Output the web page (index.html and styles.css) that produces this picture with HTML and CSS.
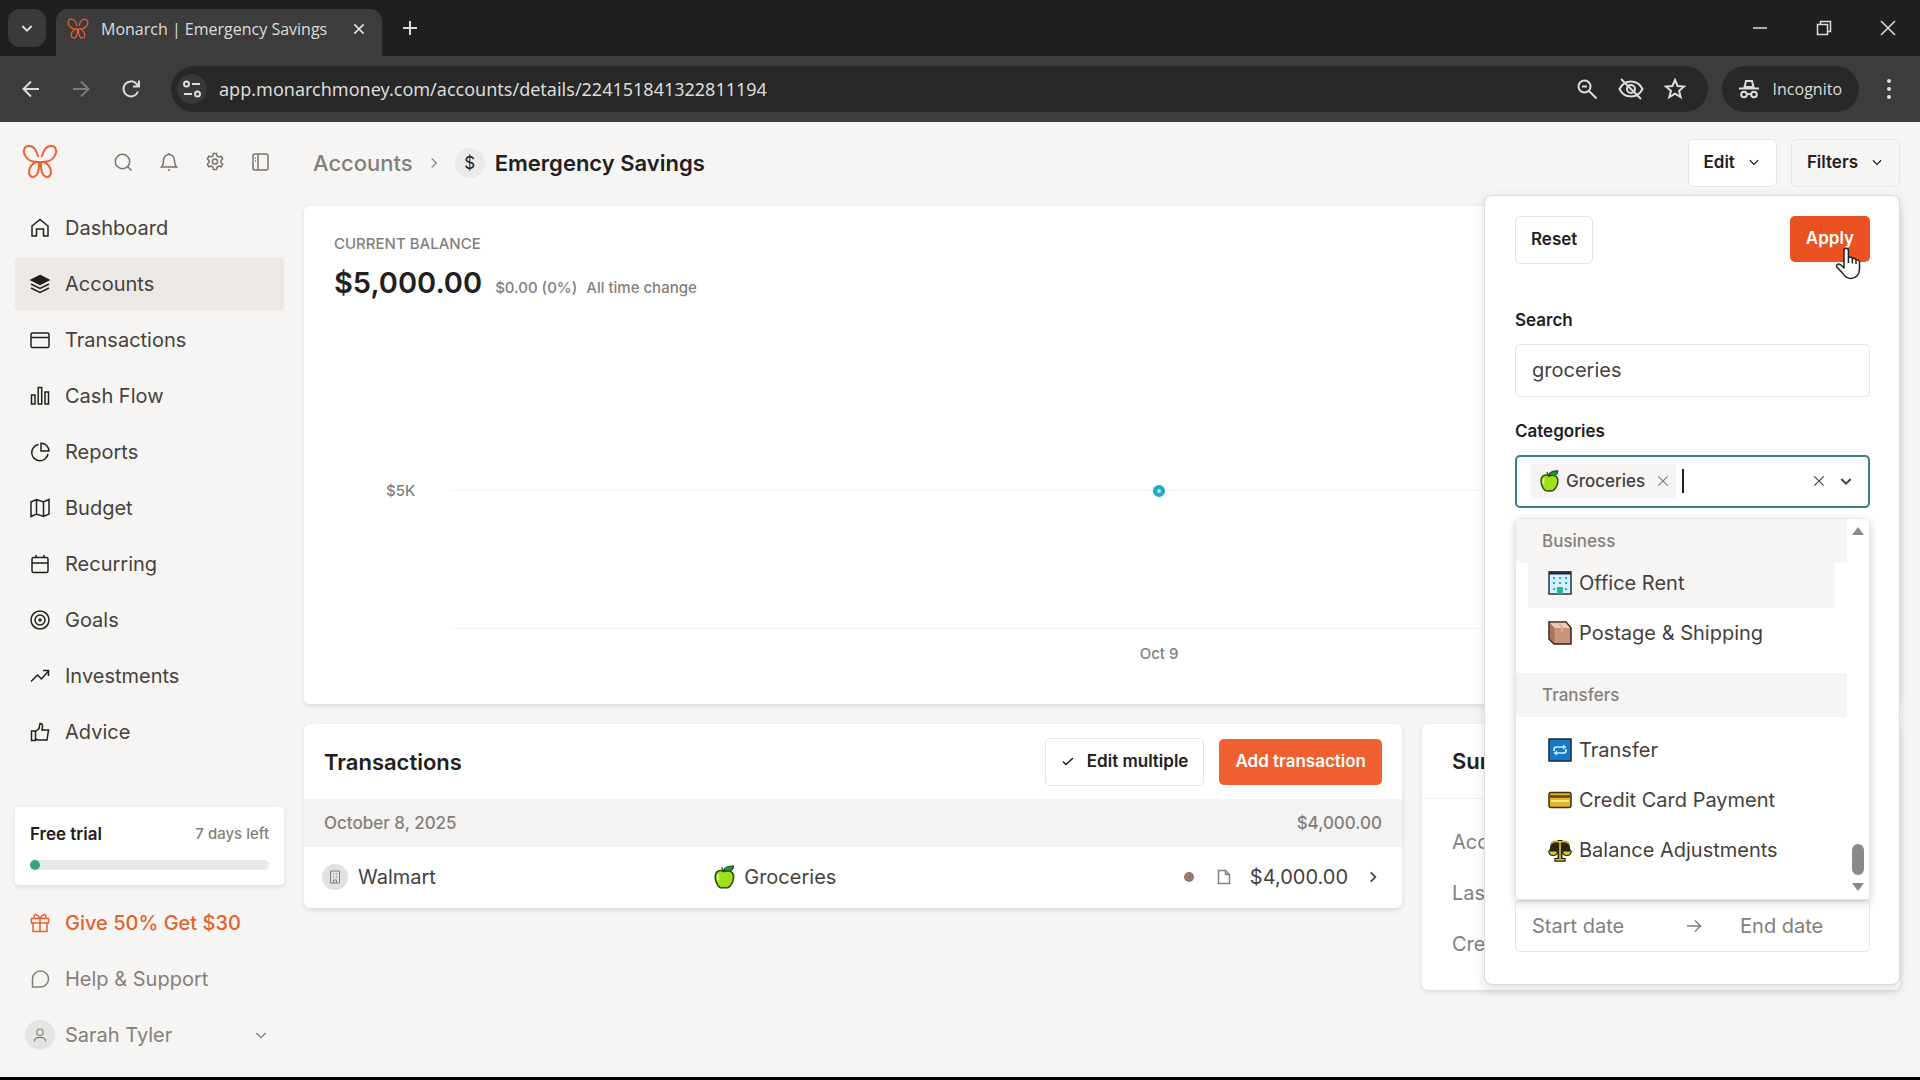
FILE: index.html
```html
<!DOCTYPE html>
<html lang="en">
<head>
<meta charset="utf-8">
<title>Monarch | Emergency Savings</title>
<link rel="stylesheet" href="styles.css">
</head>
<body>
<svg class="defs" aria-hidden="true">
  <symbol id="i-logo" viewBox="0 0 36 36">
    <path d="M16 13C15.500 9 13 2 7 2C2.500 2 1 6 2.200 9.500C3.800 14 8 17.500 13 17.800L18 18.200L23 17.800C28 17.500 32.200 14 33.800 9.500C35 6 33.500 2 29 2C23 2 20.500 9 20 13"/>
    <path d="M14 18C10.500 19.500 7.500 23.500 7 27.500C6.600 31 9 33.500 12 32.800C15.500 32 17.200 28.500 17.200 18.500M22 18C25.500 19.500 28.500 23.500 29 27.500C29.400 31 27 33.500 24 32.800C20.500 32 18.800 28.500 18.800 18.500"/>
  </symbol>
  <symbol id="i-chev-down" viewBox="0 0 24 24"><path d="M5 9l7 7 7-7"/></symbol>
  <symbol id="i-chev-right" viewBox="0 0 24 24"><path d="M8 4l8 8-8 8"/></symbol>
  <symbol id="i-x" viewBox="0 0 24 24"><path d="M4 4l16 16M20 4L4 20"/></symbol>
  <symbol id="i-apple" viewBox="0 0 24 24">
    <path d="M11 6.500C7.500 4.500 3.500 5.500 2.500 9.500c-1 5 1.200 10.500 4.500 13 1.500.600 2.500.200 4.200.200s2.800.400 4.200-.2c3.500-2.500 6-8 5-12.700C19.500 6 15 4.500 11 6.500z" fill="#9ee01c" stroke="#35500f" stroke-width="1.700"/>
    <path d="M6 9.500c-1.500 1-1.500 4-.5 6" fill="none" stroke="#e2f98a" stroke-width="2"/>
    <path d="M10.500 7C10 4.500 9 3 8.500 2.500" fill="none" stroke="#33440f" stroke-width="1.500"/>
    <path d="M11 5.500C11.500 2 15 1 20.500 1c0 4-3.500 6-9.500 4.500z" fill="#1f9c3a" stroke="#174d1f" stroke-width="1.200"/>
  </symbol>
</svg>

<header class="browser">
  <div class="tabs">
    <button class="tab-search" aria-label="Search tabs"><svg class="ico w16 s3"><use href="#i-chev-down"/></svg></button>
    <div class="tab">
      <svg class="ico w22 brand s2"><use href="#i-logo"/></svg>
      <span class="tab-title">Monarch | Emergency Savings</span>
      <button class="plain" aria-label="Close tab"><svg class="ico w14 s3"><use href="#i-x"/></svg></button>
    </div>
    <button class="plain new-tab" aria-label="New tab"><svg class="ico w16 s2" viewBox="0 0 16 16"><path d="M8 1v14M1 8h14"/></svg></button>
    <div class="window-controls">
      <button class="plain" aria-label="Minimize"><svg class="ico w16 s15" viewBox="0 0 16 16"><path d="M1 8h14"/></svg></button>
      <button class="plain" aria-label="Restore"><svg class="ico w16 s15" viewBox="0 0 16 16"><path d="M1.500 4.500h10v10h-10zM4.500 4.500v-3h10v10h-3"/></svg></button>
      <button class="plain" aria-label="Close"><svg class="ico w16 s15" viewBox="0 0 16 16"><path d="M1 1l14 14M15 1L1 15"/></svg></button>
    </div>
  </div>
  <div class="toolbar">
    <button class="plain" aria-label="Back"><svg class="ico w20 s2" viewBox="0 0 20 20"><path d="M18 10H3M10 2.500L2.500 10l7.500 7.500"/></svg></button>
    <button class="plain dim" aria-label="Forward"><svg class="ico w20 s2" viewBox="0 0 20 20"><path d="M2 10h15M10 2.500l7.500 7.500-7.500 7.500"/></svg></button>
    <button class="plain" aria-label="Reload"><svg class="ico w20 s2" viewBox="0 0 20 20"><path d="M17 12.500A7.500 7.500 0 1 1 15.500 4.800L18 7.500M18 1.500v6h-6"/></svg></button>
    <div class="address">
      <button class="plain site-info" aria-label="Site information"><svg class="ico w20 s2" viewBox="0 0 20 20"><circle cx="4.500" cy="5" r="2.500"/><path d="M10 5h8M2 15h8"/><circle cx="15.500" cy="15" r="2.500"/></svg></button>
      <input class="url" aria-label="Address" value="app.monarchmoney.com/accounts/details/224151841322811194">
      <button class="plain" aria-label="Zoom"><svg class="ico w22 s2" viewBox="0 0 22 22"><circle cx="8.500" cy="8.500" r="6"/><path d="M13 13l7.500 7.500M6 8.500h5"/></svg></button>
      <button class="plain" aria-label="Tracking protection"><svg class="ico w26 s2" viewBox="0 0 26 22"><path d="M1.500 11C4 6 8 3.500 13 3.500S22 6 24.500 11C22 16 18 18.500 13 18.500S4 16 1.500 11zM3 1l20 20"/><circle cx="13" cy="11" r="4"/></svg></button>
      <button class="plain" aria-label="Bookmark"><svg class="ico w22 s2" viewBox="0 0 22 22"><path d="M11 2l2.600 6 6.500.500-5 4.300 1.600 6.400-5.700-3.500-5.700 3.500 1.600-6.400-5-4.300 6.500-.500z"/></svg></button>
    </div>
    <div class="incognito">
      <svg class="ico w20 s2" viewBox="0 0 20 20"><path d="M5.500 8L7 2h6l1.500 6z" /><path d="M0 9.500h20M8 15.500q2-1.200 4 0"/><circle cx="5" cy="15.500" r="2.800"/><circle cx="15" cy="15.500" r="2.800"/></svg>
      <span>Incognito</span>
    </div>
    <button class="plain" aria-label="Menu"><svg class="w20" viewBox="0 0 20 20" fill="currentColor"><circle cx="10" cy="2" r="2"/><circle cx="10" cy="10" r="2"/><circle cx="10" cy="18" r="2"/></svg></button>
  </div>
</header>

<div class="app">
  <aside class="sidebar">
    <div class="brand-row">
      <a class="logo" href="#" aria-label="Monarch"><svg class="ico w36 brand s2"><use href="#i-logo"/></svg></a>
      <button class="plain" aria-label="Search"><svg class="ico w20" viewBox="0 0 20 20"><circle cx="9.500" cy="9.500" r="7.200"/><path d="M14.500 14.500l4 4"/></svg></button>
      <button class="plain" aria-label="Notifications"><svg class="ico w20" viewBox="0 0 20 20"><path d="M10 1v1.500M2.500 15c1.500-1.500 2-3.500 2-6.500C4.500 5 7 2.500 10 2.500S15.500 5 15.500 8.500c0 3 .5 5 2 6.500zM9 18h2"/></svg></button>
      <button class="plain" aria-label="Settings"><svg class="ico w20" viewBox="0 0 20 20"><path d="M8.500 1.500h3l.6 2.400 1.700 1 2.400-.7 1.500 2.600-1.800 1.700v2l1.800 1.700-1.500 2.600-2.400-.7-1.700 1-.6 2.400h-3l-.6-2.400-1.700-1-2.400.7-1.500-2.600 1.800-1.700v-2L2.300 6.800l1.500-2.600 2.400.7 1.700-1z"/><circle cx="10" cy="9.500" r="2.600"/></svg></button>
      <button class="plain" aria-label="Collapse sidebar"><svg class="ico w20" viewBox="0 0 20 20"><rect x="2" y="2" width="15" height="16" rx="2"/><path d="M7 2v16M4 6h1M4 9h1"/></svg></button>
    </div>
    <nav class="nav">
      <a href="#"><svg class="ico w20" viewBox="0 0 20 20"><path d="M2 8l8-6.500L18 8v10h-4.500v-7h-7v7H2z"/></svg>Dashboard</a>
      <a href="#" class="active" aria-current="page"><svg class="ico w20" viewBox="0 0 20 20"><path d="M10 1.500L19 6l-9 4.500L1 6z" fill="currentColor"/><path d="M1 10l9 4.500 9-4.500M1 14l9 4.500 9-4.500"/></svg>Accounts</a>
      <a href="#"><svg class="ico w20" viewBox="0 0 20 20"><rect x="1" y="3" width="18" height="14.500" rx="1.500"/><path d="M1 7.500h18"/></svg>Transactions</a>
      <a href="#"><svg class="ico w20" viewBox="0 0 20 20"><rect x="1.500" y="9" width="3.500" height="9"/><rect x="8.200" y="1.500" width="3.500" height="16.500"/><rect x="15" y="6" width="3.500" height="12"/></svg>Cash Flow</a>
      <a href="#"><svg class="ico w20" viewBox="0 0 20 20"><path d="M8.500 2.500A8.200 8.200 0 1 0 18 12"/><path d="M11 1.200V9h8A8 8 0 0 0 11 1.200z"/></svg>Reports</a>
      <a href="#"><svg class="ico w20" viewBox="0 0 20 20"><path d="M1 4l5.500-2.500 7 2.500L19 1.500V16l-5.500 2.500-7-2.500L1 18.500zM6.500 1.500V16M13.500 4v14.500"/></svg>Budget</a>
      <a href="#"><svg class="ico w20" viewBox="0 0 20 20"><rect x="2" y="3.500" width="16" height="15" rx="1.500"/><path d="M2 9h16M6 1v2.500M14 1v2.500"/></svg>Recurring</a>
      <a href="#"><svg class="ico w20" viewBox="0 0 20 20"><circle cx="10" cy="10" r="9"/><circle cx="10" cy="10" r="5"/><circle cx="10" cy="10" r="1"/></svg>Goals</a>
      <a href="#"><svg class="ico w20" viewBox="0 0 20 20"><path d="M1 15.500l6.500-6.500 4 4L18.500 5M13 4.500h5.500V10"/></svg>Investments</a>
      <a href="#"><svg class="ico w20" viewBox="0 0 20 20"><path d="M1.500 9h4v9.500h-4zM5.500 9.500l3.500-3L10 1.500c2 0 3 1.500 2.500 3.500L12 8h6.500l-1.500 10H8l-2.500-1"/></svg>Advice</a>
    </nav>
    <div class="sidebar-foot">
      <div class="trial">
        <div class="trial-row"><strong>Free trial</strong><span>7 days left</span></div>
        <div class="trial-bar"><div class="trial-fill"></div></div>
      </div>
      <nav class="nav">
        <a href="#" class="promo"><svg class="ico w20" viewBox="0 0 20 20"><path d="M1.500 5.500h17v4.500h-17zM3 10h14v8.500H3zM10 5.500v13M10 5.500C8 1 4 .5 4 3.500c0 1.500 1.500 2 2 2M10 5.500c2-4.500 6-5 6-2 0 1.500-1.500 2-2 2"/></svg>Give 50% Get $30</a>
        <a href="#" class="muted"><svg class="ico w20" viewBox="0 0 20 20"><path d="M2.500 18V10A8 8 0 1 1 10.500 18z"/></svg>Help &amp; Support</a>
        <a href="#" class="muted user"><span class="avatar"><svg class="ico w16" viewBox="0 0 20 20"><circle cx="10" cy="6.500" r="4"/><path d="M3 18c0-4 3-5 7-5s7 1 7 5"/></svg></span><span class="grow">Sarah Tyler</span><svg class="ico w16 s2"><use href="#i-chev-down"/></svg></a>
      </nav>
    </div>
  </aside>

  <main class="main">
    <div class="page-head">
      <a class="crumb" href="#">Accounts</a>
      <svg class="ico w14 s2 grey"><use href="#i-chev-right"/></svg>
      <span class="acct-badge">$</span>
      <h1>Emergency Savings</h1>
      <button class="btn">Edit <svg class="ico w14 s2"><use href="#i-chev-down"/></svg></button>
      <div class="filters">
        <button class="btn pressed" aria-expanded="true">Filters <svg class="ico w14 s2"><use href="#i-chev-down"/></svg></button>
        <form class="panel">
          <div class="panel-actions">
            <button type="button" class="btn">Reset</button>
            <div class="apply-wrap">
              <button type="button" class="btn primary hover">Apply</button>
              <svg class="cursor" viewBox="0 0 26 34"><path d="M9 18V4.500a2.200 2.200 0 0 1 4.400 0V12c1-1.500 3.800-1.200 4 .8 1.200-1 3.600-.5 3.600 1.400 1.400-.8 3.500-.2 3.500 2V23c0 5.500-3.500 9.500-8.500 9.500-4.500 0-6.500-2-8.500-5.500L1.800 21c-.8-1.600.6-3.500 2.700-2.800 1.500.5 3 2.300 4.500 3.800zM13.400 12v5M17.400 13v4.500M21 14.500V18" fill="#fff" stroke="#222" stroke-width="1.500" stroke-linejoin="round"/></svg>
            </div>
          </div>
          <div class="field">
            <label for="search">Search</label>
            <input id="search" class="box" type="text" value="groceries">
          </div>
          <div class="field">
            <label for="cats">Categories</label>
            <div class="box combo">
              <span class="chip"><svg class="w22"><use href="#i-apple"/></svg>Groceries<button type="button" class="plain" aria-label="Remove Groceries"><svg class="ico w14 s2 grey"><use href="#i-x"/></svg></button></span>
              <span class="caret"></span>
              <input id="cats" type="text" role="combobox" aria-expanded="true" aria-controls="cat-menu">
              <button type="button" class="plain" aria-label="Clear"><svg class="ico w14 s2"><use href="#i-x"/></svg></button>
              <button type="button" class="plain" aria-label="Toggle menu"><svg class="ico w16 s3"><use href="#i-chev-down"/></svg></button>
            </div>
            <div class="menu" id="cat-menu">
              <div class="menu-list">
                <div class="menu-head">Business</div>
                <ul class="tight">
                  <li class="focus"><svg class="w24" viewBox="0 0 24 24"><rect x="1" y="1" width="22" height="22" fill="#d4f1fd" stroke="#1f3440" stroke-width="1.500"/><path d="M1 2h22" stroke="#1c2d38" stroke-width="3"/><path d="M5 7h2M11 7h2M17 7h2M5 12h2M11 12h2M17 12h2M5 18h2M17 18h2" stroke="#2ba7e6" stroke-width="2"/><path d="M9 16h6v7H9z" fill="#26b39a"/></svg>Office Rent</li>
                  <li><svg class="w24" viewBox="0 0 24 24"><path d="M1 1h17l5 6v16H6l-5-5z" fill="#c8957a" stroke="#2e211b" stroke-width="1.500"/><path d="M1.800 1.800h16L22 7H6.500z" fill="#ecc9b4"/><path d="M1.800 2L6.500 7v15.500l-4.700-5z" fill="#a87359"/><path d="M11 2l3 5v4" fill="none" stroke="#dcae94" stroke-width="2"/></svg>Postage &amp; Shipping</li>
                </ul>
                <div class="menu-head second">Transfers</div>
                <ul>
                  <li><svg class="w24" viewBox="0 0 24 24"><rect x="1" y="1" width="22" height="22" fill="#1878c8" stroke="#14293a" stroke-width="1.500"/><path d="M6 13v-1.500a2.500 2.500 0 0 1 2.500-2.500H16M18 11v1.500a2.500 2.500 0 0 1-2.500 2.500H8" fill="none" stroke="#c8efff" stroke-width="1.700"/><path d="M15 6.500l3.500 2.500-3.500 2.500zM9 12.500L5.500 15 9 17.500z" fill="#c8efff"/></svg>Transfer</li>
                  <li><svg class="w24" viewBox="0 0 24 24"><rect x="1" y="4.500" width="22" height="15" rx="2" fill="#e2b42a" stroke="#3b2f0b" stroke-width="1.500"/><path d="M1.500 8.500h21" stroke="#5a4710" stroke-width="2.500"/><path d="M3 13h18" stroke="#fbe48b" stroke-width="2"/></svg>Credit Card Payment</li>
                  <li><svg class="w24" viewBox="0 0 24 24"><path d="M3 5l9-3 9 3 2 9h-9V5h-4v9H1z" fill="#2b2410"/><path d="M12 2v19" stroke="#2b2410" stroke-width="5"/><path d="M.8 13h8.700c0 6-8.700 6-8.700 0zM14.500 13h8.700c0 6-8.700 6-8.700 0zM7 20.500h10v2.700H7z" fill="#d8c22c" stroke="#2b2410" stroke-width="1.200"/><path d="M12 3v18M3 5.500c3-3 6-2.500 9-1 3-1.500 6-2 9 1" fill="none" stroke="#cbb62c" stroke-width="1.800"/></svg>Balance Adjustments</li>
                </ul>
              </div>
              <div class="scrollbar"><svg class="w12" viewBox="0 0 12 8"><path d="M0 8l6-8 6 8z"/></svg><span class="thumb"></span><svg class="w12" viewBox="0 0 12 8"><path d="M0 0l6 8 6-8z"/></svg></div>
            </div>
          </div>
          <div class="box dates">
            <input type="text" placeholder="Start date" aria-label="Start date">
            <svg class="ico w16 s15 grey" viewBox="0 0 16 16"><path d="M1 8h13M9 2.500L14.500 8 9 13.500"/></svg>
            <input type="text" placeholder="End date" aria-label="End date">
          </div>
        </form>
      </div>
    </div>

    <section class="card balance">
      <div class="eyebrow">CURRENT BALANCE</div>
      <div class="balance-row"><strong>$5,000.00</strong><span>$0.00 (0%)</span><span>All time change</span></div>
      <div class="chart">
        <span class="y-label">$5K</span>
        <div class="plot"><i class="point"></i></div>
        <span class="x-label">Oct 9</span>
      </div>
    </section>

    <div class="columns">
      <section class="card">
        <div class="card-head">
          <h2>Transactions</h2>
          <button class="btn"><svg class="ico w14 s15" viewBox="0 0 14 14"><path d="M2 7.500l3 3L12 4"/></svg> Edit multiple</button>
          <button class="btn primary">Add transaction</button>
        </div>
        <table class="tx">
          <colgroup><col class="col-merchant"><col><col></colgroup>
          <thead><tr><th colspan="2" scope="colgroup">October 8, 2025</th><th class="num">$4,000.00</th></tr></thead>
          <tbody><tr>
            <td class="merchant"><div class="cell"><span class="m-icon"><svg class="ico w14 s1" viewBox="0 0 14 14"><path d="M2.500 1h9v12h-9zM5.500 13v-3h3v3M5 4h1M8 4h1M5 7h1M8 7h1"/></svg></span>Walmart</div></td>
            <td><div class="cell tag"><svg class="w24"><use href="#i-apple"/></svg>Groceries</div></td>
            <td><div class="cell end"><i class="dot"></i><svg class="ico w16 grey" viewBox="0 0 16 16"><path d="M2.500 1.500h7l4 4v9h-11zM9.500 1.500v4h4"/></svg><span>$4,000.00</span><svg class="ico w14 s3"><use href="#i-chev-right"/></svg></div></td>
          </tr></tbody>
        </table>
      </section>
      <section class="card summary">
        <div class="card-head"><h2>Summary</h2></div>
        <dl><dt>Account type</dt><dt>Last updated</dt><dt>Created</dt></dl>
      </section>
    </div>
  </main>
</div>
</body>
</html>
```
FILE: styles.css
```css
:root {
  --ink: #22201d;
  --text: #45413d;
  --muted: #83807c;
  --page: #f6f5f3;
  --line: #e8e6e4;
  --orange: #f05f30;
  --shadow: 0 2px 5px rgba(34, 32, 29, 0.12);
}
* { box-sizing: border-box; }
body {
  margin: 0;
  min-height: 100vh;
  display: flex;
  flex-direction: column;
  overflow-x: hidden;
  font: 20px/24px Inter, "Liberation Sans", sans-serif;
  color: var(--text);
  background: var(--page);
  border-bottom: 3px solid #000;
}
button, input { font: inherit; color: inherit; }
input { min-width: 0; border: 0; padding: 0; background: none; outline: 0; }
button { cursor: pointer; }
a { color: inherit; text-decoration: none; }
h1, h2, ul, dl { margin: 0; padding: 0; }
.defs { position: absolute; width: 0; height: 0; }
.plain { display: flex; border: 0; padding: 0; background: none; }
svg { flex: none; }
.ico { fill: none; stroke: currentColor; stroke-width: 1.5; }
.s1 { stroke-width: 1; }
.s15 { stroke-width: 1.5; }
.s2 { stroke-width: 2; }
.s3 { stroke-width: 3; }
.w12 { width: 12px; height: 8px; }
.w14 { width: 14px; height: 14px; }
.w16 { width: 16px; height: 16px; }
.w20 { width: 20px; height: 20px; }
.w22 { width: 22px; height: 22px; }
.w24 { width: 24px; height: 24px; }
.w26 { width: 26px; height: 22px; }
.w36 { width: 36px; height: 36px; }
.brand { color: var(--orange); }
.grey { color: var(--muted); }
.grow { flex: 1; }

/* Browser chrome */
.browser { font-family: "Open Sans", "Noto Sans", sans-serif; color: #dcdcdc; background: #3c3c3c; }
.tabs { display: flex; align-items: center; height: 56px; padding: 0 24px 0 8px; background: #202020; }
.tab-search {
  display: flex; align-items: center; justify-content: center;
  width: 38px; height: 38px; margin-right: 10px;
  border: 0; border-radius: 12px; background: #3a3a3a;
}
.tab {
  display: flex; align-items: center; align-self: flex-end; gap: 12px;
  width: 326px; height: 47px; padding: 0 16px 8px 11px;
  border-radius: 12px 12px 0 0; background: #3c3c3c; font-size: 16px;
}
.tab-title { flex: 1; white-space: nowrap; }
.new-tab { margin-left: 20px; }
.window-controls { display: flex; gap: 48px; margin-left: auto; }
.toolbar { display: flex; align-items: center; height: 66px; padding: 0 21px; }
.toolbar > .plain { margin-right: 30px; }
.toolbar > .plain:last-child { margin-right: 0; }
.dim { color: #7c7c7c; }
.address {
  flex: 1; display: flex; align-items: center; gap: 20px;
  height: 46px; padding: 0 22px 0 6px; border-radius: 23px; background: #282828;
}
.site-info { align-items: center; justify-content: center; width: 30px; height: 30px; border-radius: 15px; background: #383838; margin-right: -8px; }
.url { flex: 1; font-family: "Noto Sans", sans-serif; font-size: 18px; }
.incognito {
  display: flex; align-items: center; gap: 14px;
  height: 46px; margin: 0 20px 0 14px; padding: 0 17px; border-radius: 23px;
  background: #282828; font-size: 16px;
}

/* Sidebar */
.app { flex: 1; display: grid; grid-template-columns: 304px minmax(0, 1fr); }
.sidebar { display: flex; flex-direction: column; padding: 0 20px 16px 15px; }
.brand-row { display: flex; align-items: center; gap: 26px; height: 80px; padding-left: 7px; color: #77736f; }
.logo { display: flex; margin-right: 29px; }
.nav { display: flex; flex-direction: column; gap: 4px; }
.nav a { display: flex; align-items: center; gap: 15px; height: 52px; padding: 0 15px; border-radius: 4px; }
.nav a.active { background: #ebe8e6; }
.nav a.active svg, .nav svg { color: var(--ink); }
.nav a.promo, .nav .promo svg { color: #e2622f; font-weight: 500; }
.nav a.muted, .nav .muted svg { color: var(--muted); }
.nav a.user { padding-left: 10px; gap: 10px; }
.avatar { display: flex; align-items: center; justify-content: center; width: 30px; height: 30px; border-radius: 50%; background: #e6e4e2; }
.sidebar-foot { margin-top: auto; display: flex; flex-direction: column; gap: 12px; }
.trial { padding: 15px; background: #fff; border-radius: 4px; box-shadow: var(--shadow); }
.trial-row { display: flex; justify-content: space-between; color: var(--muted); font-size: 15px; font-weight: 500; }
.trial-row strong { font-size: 17px; font-weight: 600; color: var(--ink); }
.trial-bar { height: 10px; margin-top: 14px; border-radius: 5px; background: #e8e8e7; }
.trial-fill { width: 10px; height: 10px; border-radius: 5px; background: #36a57d; }

/* Buttons */
.btn {
  display: flex; align-items: center; gap: 12px;
  height: 48px; padding: 0 15px 2px; white-space: nowrap;
  border: 1px solid var(--line); border-radius: 5px; background: #fff;
  color: var(--ink); font-size: 17px; font-weight: 600;
}
.btn.pressed { background: var(--page); }
.btn.primary { height: 46px; border-color: transparent; background: var(--orange); color: #fff; }
.btn.primary.hover { background: #ea5221; }

/* Main */
.main { padding-right: 20px; }
.page-head { display: flex; align-items: center; height: 84px; padding: 0 0 3px 9px; font-size: 22px; }
.crumb { color: var(--muted); font-weight: 500; margin-right: 14px; }
.acct-badge { width: 30px; height: 30px; margin: 0 10px 0 14px; border-radius: 50%; background: #eceae8; color: var(--ink); font-size: 17px; line-height: 30px; text-align: center; }
h1 { flex: 1; color: var(--ink); font-size: 22px; font-weight: 600; }
.filters { position: relative; margin-left: 14px; }
.card { background: #fff; border-radius: 6px; box-shadow: var(--shadow); overflow: hidden; }

.balance { padding: 26px 32px 38px 30px; }
.eyebrow { color: var(--muted); font-size: 15px; font-weight: 500; }
.balance-row { display: flex; align-items: baseline; gap: 9px; margin-top: 11px; color: var(--muted); font-size: 15px; font-weight: 500; line-height: 32px; }
.balance-row strong { margin-right: 4px; color: var(--ink); font-size: 29px; font-weight: 600; }
.chart { display: grid; grid-template-columns: 116px 1fr; color: var(--muted); font-size: 15px; font-weight: 500; }
.y-label { padding-left: 52px; margin-top: 175px; }
.plot { display: flex; justify-content: center; height: 139px; margin-top: 186px; border: solid #f4f4f4; border-width: 1px 0; }
.point { width: 12px; height: 12px; margin-top: -6px; border: 4px solid #1fa9c2; border-radius: 50%; background: #b8e6f2; }
.x-label { grid-column: 2; margin-top: 13px; text-align: center; }

.columns { display: grid; grid-template-columns: minmax(0, 1fr) 478px; align-items: start; gap: 20px; margin-top: 20px; }
.card-head { display: flex; align-items: center; gap: 15px; height: 75px; padding: 0 20px; }
h2 { flex: 1; color: var(--ink); font-size: 22px; font-weight: 600; }
.tx { width: 100%; border-collapse: collapse; table-layout: fixed; }
.col-merchant { width: 37%; }
.tx th { height: 48px; padding: 0 20px; background: #f4f3f2; color: var(--muted); font-size: 17px; font-weight: 500; text-align: left; }
.tx th.num { text-align: right; }
.tx td { height: 61px; padding: 0 22px 2px 0; }
.tx .merchant { padding-left: 18px; }
.cell { display: flex; align-items: center; gap: 10px; }
.cell.tag { gap: 7px; padding-left: 3px; }
.cell.end { justify-content: flex-end; gap: 18px; }
.m-icon { display: flex; align-items: center; justify-content: center; width: 26px; height: 26px; border-radius: 50%; background: #e3e1df; color: var(--muted); }
.dot { width: 10px; height: 10px; margin-right: 4px; border-radius: 50%; background: #95796a; }
.summary .card-head { padding-left: 30px; border-bottom: 1px solid #f2f1f0; }
.summary dl { padding: 18px 30px 20px; color: var(--muted); }
.summary dt { height: 51px; line-height: 51px; }

/* Filter panel */
.panel {
  position: absolute; z-index: 2; top: 56px; right: 0;
  display: flex; flex-direction: column;
  width: 416px; padding: 20px 29px 32px 30px;
  background: #fff; border: 1px solid #dddbd9; border-radius: 8px;
  box-shadow: 0 4px 12px rgba(34, 32, 29, 0.14);
  font-size: 20px;
}
.panel-actions { display: flex; justify-content: space-between; margin-bottom: 44px; }
.apply-wrap { position: relative; }
.cursor { position: absolute; left: 45px; top: 30px; width: 26px; height: 34px; }
.field { position: relative; margin-bottom: 22px; }
.field label { display: block; margin-bottom: 12px; color: var(--ink); font-size: 17px; font-weight: 600; }
.box { display: block; width: 100%; height: 53px; padding: 0 16px; border: 1px solid var(--line); border-radius: 5px; background: #fff; }
.combo { display: flex; align-items: center; gap: 6px; padding: 0 14px; border: 2px solid #33837f; }
.combo input { flex: 1; }
.combo > .plain { margin-left: 6px; }
.chip { display: flex; align-items: center; gap: 5px; height: 34px; padding: 0 6px 0 8px; background: #f5f4f3; font-size: 17px; font-weight: 500; }
.chip .plain { margin-left: 6px; }
.caret { width: 2px; height: 24px; background: var(--ink); }
.menu {
  position: absolute; z-index: 1; top: 99px; left: 0; right: 0;
  display: flex; background: #fff;
  border: 1px solid var(--line); border-radius: 4px;
  box-shadow: 0 3px 8px rgba(34, 32, 29, 0.2);
}
.menu-list { flex: 1; padding-bottom: 24px; }
.menu-head { height: 44px; padding-left: 26px; background: #f6f5f4; color: var(--muted); font-size: 17px; font-weight: 500; line-height: 44px; }
.menu-head.second { margin: 15px 0 8px; }
.menu ul { list-style: none; }
.menu ul.tight { margin-top: -5px; }
.menu li { display: flex; align-items: center; gap: 7px; height: 50px; margin: 0 12px; padding-left: 20px; white-space: nowrap; }
.menu li.focus { background: #f6f5f4; }
.scrollbar { display: flex; flex-direction: column; align-items: center; width: 22px; padding: 8px 0; fill: #8a8a8a; }
.thumb { width: 12px; height: 31px; margin: auto 0 8px; border-radius: 6px; background: #8a8a8a; }
.dates { display: flex; align-items: center; height: 52px; margin-top: 370px; }
.dates input { flex: 1; }
.dates input:first-child { flex: 0 0 48%; }
.dates input:last-child { margin-left: 38px; }
.dates input::placeholder { color: var(--muted); opacity: 1; }
```
